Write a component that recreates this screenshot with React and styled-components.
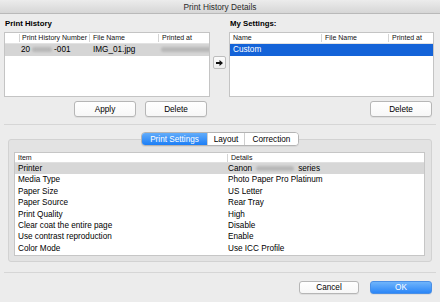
import React from "react";
import styled, { createGlobalStyle } from "styled-components";

const GlobalStyle = createGlobalStyle`
  html, body {
    margin: 0;
    padding: 0;
    background: #ececec;
  }
  body {
    font-family: "Liberation Sans", Arial, sans-serif;
    color: #000;
  }
`;

const historyRows = [{ num: ["20", "-001"], file: "IMG_01.jpg" }];

const settings = [
  ["Printer", null],
  ["Media Type", "Photo Paper Pro Platinum"],
  ["Paper Size", "US Letter"],
  ["Paper Source", "Rear Tray"],
  ["Print Quality", "High"],
  ["Clear coat the entire page", "Disable"],
  ["Use contrast reproduction", "Enable"],
  ["Color Mode", "Use ICC Profile"]
];

class App extends React.Component {
  render() {
    return (
      <Window>
        <GlobalStyle />
        {/* Title bar */}
        <TitleBar>Print History Details</TitleBar>

        {/* Top lists */}
        <TopSection>
          <Panel $width="206px">
            <PanelLabel>Print History</PanelLabel>
            <List>
              <ListHeader $cols="14px 70px 69px 1fr">
                <HeadCell />
                <HeadCell $divider $pad="2px">Print History Number</HeadCell>
                <HeadCell $divider>File Name</HeadCell>
                <HeadCell $divider>Printed at</HeadCell>
              </ListHeader>
              {historyRows.map((r, i) => (
                <ListRow key={i} $cols="14px 70px 69px 1fr" $tone="gray">
                  <Cell />
                  <Cell $pad="2px">
                    {r.num[0]}
                    <Smudge $w="20px" />
                    {r.num[1]}
                  </Cell>
                  <Cell $pad="4px">{r.file}</Cell>
                  <Cell $pad="1px">
                    <Smudge $w="54px" />
                  </Cell>
                </ListRow>
              ))}
            </List>
            <ButtonRow $right="3px">
              <Button $width="62px">Apply</Button>
              <Button $width="62px">Delete</Button>
            </ButtonRow>
          </Panel>

          <ArrowColumn>
            <ArrowButton>
              <svg width="7" height="6" viewBox="0 0 7 6">
                <path d="M0 2h3.5V0L7 3 3.5 6V4H0z" fill="#111" />
              </svg>
            </ArrowButton>
          </ArrowColumn>

          <Panel $width="205px">
            <PanelLabel>My Settings:</PanelLabel>
            <List>
              <ListHeader $cols="91px 67px 1fr">
                <HeadCell>Name</HeadCell>
                <HeadCell $divider>File Name</HeadCell>
                <HeadCell $divider>Printed at</HeadCell>
              </ListHeader>
              <ListRow $cols="91px 67px 1fr" $tone="blue">
                <Cell $pad="3px">Custom</Cell>
                <Cell />
                <Cell />
              </ListRow>
            </List>
            <ButtonRow $right="2px">
              <Button $width="62px">Delete</Button>
            </ButtonRow>
          </Panel>
        </TopSection>

        <Separator $top="7px" />

        {/* Tabs + group box */}
        <Tabs>
          <Tab $active $width="65px">Print Settings</Tab>
          <Tab $width="37px">Layout</Tab>
          <Tab $width="54px">Correction</Tab>
        </Tabs>
        <GroupBox>
          <Table>
            <TableHeader>
              <HeadCell $pad="3px">Item</HeadCell>
              <HeadCell $divider>Details</HeadCell>
            </TableHeader>
            {settings.map(([item, value], i) => (
              <TableRow key={item} $selected={i === 0}>
                <Cell $pad="3px">{item}</Cell>
                <Cell $pad="1px">
                  {value === null ? (
                    <>
                      Canon<Smudge $w="38px" $gap="4px" />series
                    </>
                  ) : (
                    value
                  )}
                </Cell>
              </TableRow>
            ))}
          </Table>
        </GroupBox>

        <Separator $top="10px" />

        {/* Footer */}
        <Footer>
          <Button $width="60px" $height="13px">Cancel</Button>
          <Button $width="62px" $height="13px" $primary>OK</Button>
        </Footer>
      </Window>
    );
  }
}

const Window = styled.div`
  width: 440px;
  height: 302px;
  background: #ececec;
  display: flex;
  flex-direction: column;
  overflow: hidden;
`;

const TitleBar = styled.div`
  height: 13px;
  line-height: 14px;
  text-align: center;
  font-size: 8.3px;
  color: #2a2a2a;
  background: linear-gradient(#ececec, #d6d6d6);
  border-bottom: 1px solid #b9b9b9;
`;

const TopSection = styled.div`
  display: flex;
  padding: 0 0 0 4px;
`;

const Panel = styled.div`
  width: ${(p) => p.$width};
  display: flex;
  flex-direction: column;
`;

const PanelLabel = styled.div`
  height: 18px;
  box-sizing: border-box;
  padding: 5px 0 0 1px;
  font-size: 7.8px;
  font-weight: bold;
  line-height: 10px;
  color: #000;
`;

const List = styled.div`
  height: 65px;
  box-sizing: border-box;
  background: #fff;
  border: 1px solid #c4c4c4;
  overflow: hidden;
`;

const ListHeader = styled.div`
  display: grid;
  grid-template-columns: ${(p) => p.$cols};
  height: 10px;
  border-bottom: 1px solid #e2e2e2;
`;

const HeadCell = styled.div`
  font-size: 7px;
  color: #111;
  white-space: nowrap;
  padding-left: ${(p) => p.$pad || "3px"};
  margin: 1px 0;
  line-height: 8px;
  border-left: ${(p) => (p.$divider ? "1px solid #d4d4d4" : "none")};
`;

const ListRow = styled.div`
  display: grid;
  grid-template-columns: ${(p) => p.$cols};
  height: 12px;
  align-items: center;
  background: ${(p) => (p.$tone === "blue" ? "#1463d8" : "#d5d5d5")};
  color: ${(p) => (p.$tone === "blue" ? "#fff" : "#000")};
`;

const Cell = styled.div`
  font-size: 8.2px;
  line-height: 12px;
  white-space: nowrap;
  overflow: hidden;
  padding-left: ${(p) => p.$pad || "3px"};
`;

const Smudge = styled.span`
  display: inline-block;
  width: ${(p) => p.$w};
  height: 5px;
  margin: 0 ${(p) => p.$gap || "2px"};
  vertical-align: middle;
  border-radius: 3px;
  background: #b8b8b8;
  filter: blur(1.3px);
`;

const ButtonRow = styled.div`
  display: flex;
  justify-content: flex-end;
  gap: 9px;
  margin-top: 4px;
  padding-right: ${(p) => p.$right};
`;

const Button = styled.div`
  width: ${(p) => p.$width};
  height: ${(p) => p.$height || "16px"};
  box-sizing: border-box;
  display: flex;
  align-items: center;
  justify-content: center;
  font-size: 8.2px;
  border-radius: 3px;
  border: 1px solid ${(p) => (p.$primary ? "#4a8fe6" : "#b6b6b6")};
  background: ${(p) =>
    p.$primary
      ? "linear-gradient(#6fb4fb, #2b86f7)"
      : "linear-gradient(#ffffff, #f7f7f7)"};
  color: ${(p) => (p.$primary ? "#fff" : "#000")};
  box-shadow: 0 1px 0 rgba(0, 0, 0, 0.06);
`;

const ArrowColumn = styled.div`
  width: 19px;
  display: flex;
  justify-content: center;
  padding-top: 42px;
  box-sizing: border-box;
`;

const ArrowButton = styled.div`
  width: 13px;
  height: 13px;
  box-sizing: border-box;
  border: 1px solid #bdbdbd;
  border-radius: 2px;
  background: linear-gradient(#fbfbfb, #ededed);
  display: flex;
  align-items: center;
  justify-content: center;
`;

const Separator = styled.div`
  height: 1px;
  margin: ${(p) => p.$top} 4px 0 4px;
  background: #d6d6d6;
`;

const Tabs = styled.div`
  align-self: center;
  display: flex;
  margin-top: 7px;
  margin-bottom: -7px;
  height: 14px;
  box-sizing: border-box;
  border: 1px solid #b4b4b4;
  border-radius: 4px;
  background: #fff;
  overflow: hidden;
  position: relative;
  z-index: 1;
  box-shadow: 0 1px 0 rgba(0, 0, 0, 0.05);
`;

const Tab = styled.div`
  width: ${(p) => p.$width};
  box-sizing: border-box;
  display: flex;
  align-items: center;
  justify-content: center;
  font-size: 8.2px;
  color: ${(p) => (p.$active ? "#fff" : "#000")};
  background: ${(p) =>
    p.$active ? "linear-gradient(#62acfa, #1c7ef6)" : "#fff"};
  & + & {
    border-left: 1px solid #cfcfcf;
  }
`;

const GroupBox = styled.div`
  margin: 0 8px;
  height: 123px;
  box-sizing: border-box;
  padding: 12px 6px 5px 5px;
  background: #e3e3e3;
  border: 1px solid #d2d2d2;
  border-radius: 3px;
`;

const Table = styled.div`
  height: 104px;
  box-sizing: border-box;
  background: #fff;
  border: 1px solid #c6c6c6;
`;

const TableHeader = styled.div`
  display: grid;
  grid-template-columns: 212px 1fr;
  height: 9px;
  border-bottom: 1px solid #e0e0e0;
`;

const TableRow = styled.div`
  display: grid;
  grid-template-columns: 212px 1fr;
  height: 11.4px;
  align-items: center;
  background: ${(p) => (p.$selected ? "#d7d7d7" : "transparent")};

  ${Cell} {
    line-height: 11.4px;
  }
`;

const Footer = styled.div`
  display: flex;
  justify-content: flex-end;
  gap: 11px;
  padding-right: 8px;
  margin-top: 8px;
`;

export default App;
